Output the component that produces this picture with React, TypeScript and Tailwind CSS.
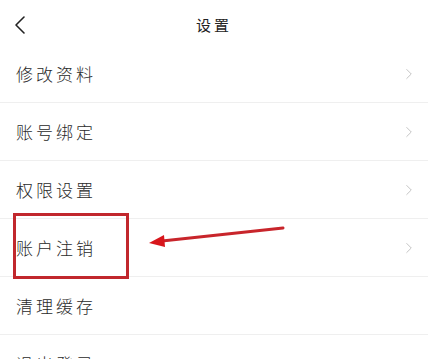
import { ChevronRight } from "lucide-react";

// settings rows
const ROWS = [
  { label: "修改资料", arrow: true },
  { label: "账号绑定", arrow: true },
  { label: "权限设置", arrow: true },
  { label: "账户注销", arrow: true },
  { label: "清理缓存", arrow: false },
  { label: "退出登录", arrow: false },
];

const FONT = {
  fontFamily: '"Noto Sans CJK SC", "Noto Sans", sans-serif',
};

export default function App() {
  return (
    <div
      className="relative h-[359px] w-[428px] overflow-hidden bg-white"
      style={FONT}
    >
      {/* Header */}
      <div className="relative flex h-[45px] items-center justify-center pt-[5px]">
        <svg
          className="absolute left-[13px] top-[15px]"
          width="14"
          height="20"
          viewBox="0 0 14 20"
          fill="none"
        >
          <path
            d="M11 2 L3 10 L11 18"
            stroke="#222"
            strokeWidth="1.6"
            strokeLinecap="round"
            strokeLinejoin="round"
          />
        </svg>
        <span className="text-[15px] tracking-[3px] text-[#222]">设置</span>
      </div>

      {/* List */}
      <div className="flex flex-col">
        {ROWS.map(({ label, arrow }) => (
          <div
            key={label}
            className="flex h-[58px] items-center justify-between border-b border-[#efefef] pl-[16px] pr-[10px]"
          >
            <span className="text-[17px] font-light tracking-[3px] text-[#2a2a2a]">
              {label}
            </span>
            {arrow && (
              <ChevronRight
                className="h-[18px] w-[18px] text-[#c2c2c2]"
                strokeWidth={1.3}
              />
            )}
          </div>
        ))}
      </div>

      {/* Annotation box */}
      <div className="absolute left-[13px] top-[213px] h-[66px] w-[116px] border-[3px] border-[#c1272d]" />

      {/* Annotation arrow */}
      <svg
        className="absolute left-0 top-0"
        width="428"
        height="359"
        viewBox="0 0 428 359"
        fill="none"
      >
        <line
          x1="283"
          y1="228"
          x2="162"
          y2="241"
          stroke="#c8252b"
          strokeWidth="3"
          strokeLinecap="round"
        />
        <polygon points="149,243 164,235 165,247" fill="#d8161c" />
      </svg>
    </div>
  );
}
